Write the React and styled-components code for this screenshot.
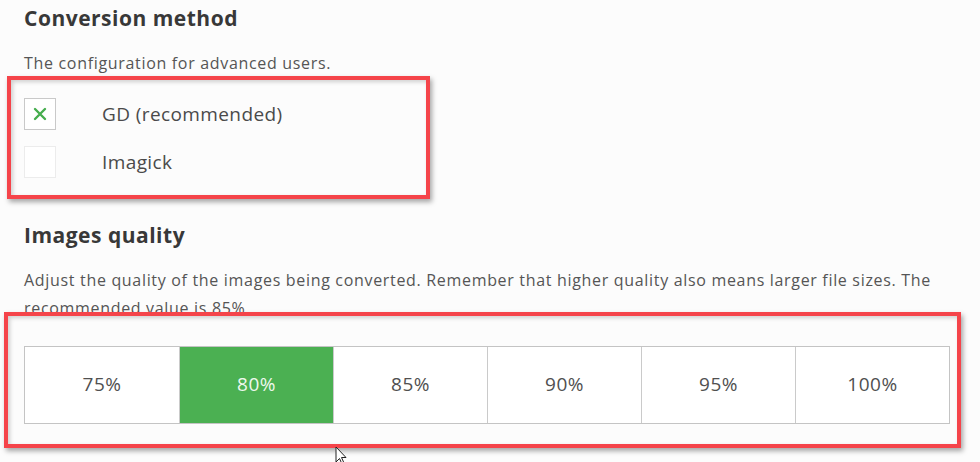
import styled, { createGlobalStyle } from "styled-components";

const GlobalStyle = createGlobalStyle`
    html, body {
        margin: 0;
        padding: 0;
        background: #fcfcfc;
        font-family: "Open Sans", "Liberation Sans", sans-serif;
        overflow: hidden;
    }
`

const Page = styled.main`
    position: relative;
    width: 980px;
    height: 462px;
    padding: 0 30px 0 24px;
    box-sizing: border-box;
`

const Heading = styled.h2`
    margin: 0;
    font-size: 21px;
    letter-spacing: 0.5px;
    line-height: 36px;
    font-weight: 700;
    color: #383838;
    margin-top: ${({ $spaced }) => ($spaced ? "39px" : "0")};
`

const Description = styled.p`
    margin: 13px 0 0;
    font-size: 16px;
    letter-spacing: 0.68px;
    line-height: 28px;
    color: #555;
    width: 926px;
`

const Highlight = styled.div`
    position: relative;
    margin-top: ${({ $gap }) => $gap};
    &::after{
        content: "";
        position: absolute;
        top: ${({ $t }) => $t}px;
        left: ${({ $l }) => $l}px;
        right: ${({ $r }) => $r}px;
        bottom: ${({ $b }) => $b}px;
        border: 4px solid #f5444a;
        box-shadow: 2px 3px 5px rgba(0, 0, 0, 0.35), inset 2px 2px 4px rgba(0, 0, 0, 0.18);
        pointer-events: none;
    }
`

const OptionList = styled.div`
    display: flex;
    flex-direction: column;
    gap: 16px;
`

const Option = styled.label`
    display: flex;
    align-items: center;
    gap: 46px;
    font-size: 19px;
    letter-spacing: 0.4px;
    color: #4a4a4a;
`

const Box = styled.span`
    width: 32px;
    height: 32px;
    box-sizing: border-box;
    border: 1px solid ${({ $checked }) => ($checked ? "#c9c9c9" : "#ececec")};
    background: #fff;
    display: flex;
    align-items: center;
    justify-content: center;
`

const QualityRow = styled.div`
    display: grid;
    grid-template-columns: repeat(6, 1fr);
    height: 78px;
    border: 1px solid #c4c4c4;
    box-sizing: border-box;
    background: #fff;
`

const QualityCell = styled.button`
    all: unset;
    display: flex;
    align-items: center;
    justify-content: center;
    padding-bottom: 3px;
    font-family: "Open Sans", "Liberation Sans", sans-serif;
    font-size: 19px;
    letter-spacing: 0.5px;
    color: ${({ $active }) => ($active ? "#eef8ee" : "#505050")};
    background: ${({ $active }) => ($active ? "#4bb052" : "transparent")};
    border-left: ${({ $first }) => ($first ? "none" : "1px solid #cacaca")};
`

const Cursor = styled.svg`
    position: absolute;
    left: 335px;
    top: 446px;
`

const options = [
    { label: "GD (recommended)", checked: true },
    { label: "Imagick", checked: false },
]

const qualities = [75, 80, 85, 90, 95, 100]

export default function App(){
    return(
        <>
        <GlobalStyle />
        <Page>
            <Heading>Conversion method</Heading>
            <Description>The configuration for advanced users.</Description>
            <Highlight $gap="21px" $t={-22} $l={-17} $r={520} $b={-21}>
                <OptionList>
                    {options.map((o) => (
                        <Option key={o.label}>
                            <Box $checked={o.checked}>
                                {o.checked &&
                                <svg width="14" height="14" viewBox="0 0 14 14">
                                    <path d="M2 2 L12 12 M12 2 L2 12" stroke="#46ad4e" strokeWidth="2.4" strokeLinecap="round" />
                                </svg>}
                            </Box>
                            {o.label}
                        </Option>
                    ))}
                </OptionList>
            </Highlight>
            <Heading $spaced>Images quality</Heading>
            <Description>
                Adjust the quality of the images being converted. Remember that higher quality also means larger file sizes. The recommended value is 85%.
            </Description>
            <Highlight $gap="24px" $t={-34} $l={-20} $r={-11} $b={-24}>
                <QualityRow>
                    {qualities.map((q, i) => (
                        <QualityCell key={q} $first={i === 0} $active={q === 80}>{q}%</QualityCell>
                    ))}
                </QualityRow>
            </Highlight>
            <Cursor width="14" height="20" viewBox="0 0 14 20">
                <path d="M1 1 L1 16 L4.5 12.5 L7 18 L9 17 L6.5 11.5 L11 11.5 Z" fill="#fff" stroke="#222" strokeWidth="1" strokeLinejoin="round" />
            </Cursor>
        </Page>
        </>
    )
}
